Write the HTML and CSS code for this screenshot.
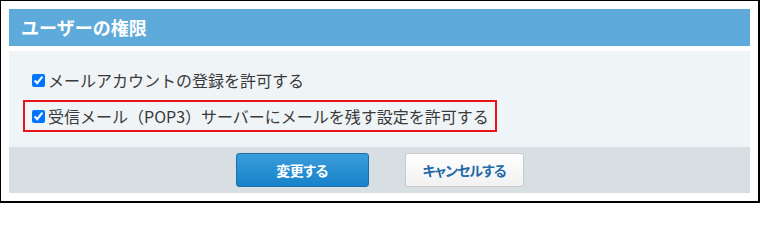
FILE: index.html
```html
<!DOCTYPE html>
<html lang="ja">
<head>
<meta charset="utf-8">
<link rel="stylesheet" href="styles.css">
</head>
<body>
<div class="frame">
  <div class="panel-title">ユーザーの権限</div>
  <div class="panel-body">
    <label class="option"><input type="checkbox" checked><span>メールアカウントの登録を許可する</span></label>
    <label class="option option-highlight"><input type="checkbox" checked><span>受信メール（POP3）サーバーにメールを残す設定を許可する</span></label>
  </div>
  <div class="panel-footer">
    <button class="btn btn-primary">変更する</button>
    <button class="btn btn-secondary">キャンセルする</button>
  </div>
</div>
</body>
</html>
```
FILE: styles.css
```css
html, body {
  margin: 0;
  padding: 0;
  background: #ffffff;
}
.frame {
  box-sizing: border-box;
  width: 760px;
  height: 203px;
  border-top: 1px solid #000;
  border-left: 1px solid #000;
  border-right: 2px solid #000;
  border-bottom: 2px solid #000;
  padding: 8px 8px 8px 8px;
  font-family: "Noto Sans CJK JP", "Noto Sans", sans-serif;
  display: flex;
  flex-direction: column;
}
.panel-title {
  height: 37px;
  background: #5eaadb;
  color: #ffffff;
  font-weight: bold;
  font-size: 18px;
  line-height: 37px;
  padding-left: 12px;
  margin-bottom: 5px;
}
.panel-body {
  background: #eff4f7;
  height: 96px;
  box-sizing: border-box;
  padding: 13px 14px 0 14px;
  display: flex;
  flex-direction: column;
  align-items: flex-start;
  gap: 4px;
}
.option {
  display: flex;
  align-items: center;
  height: 32px;
  box-sizing: border-box;
  border: 2px solid transparent;
  padding: 0 6px 0 3px;
  font-size: 16px;
  color: #3a3a3a;
}
.option input {
  width: 13px;
  height: 13px;
  margin: 0 3px 0 4px;
}
.option-highlight {
  border-color: #e8141b;
}
.panel-footer {
  background: #d8dfe2;
  flex: 1;
  display: flex;
  justify-content: center;
  align-items: center;
  gap: 36px;
}
.btn {
  height: 34px;
  border-radius: 3px;
  font-family: "Noto Sans CJK JP", "Noto Sans", sans-serif;
  font-weight: bold;
  font-size: 14px;
  font-feature-settings: "palt";
  padding: 0;
  cursor: pointer;
}
.btn-primary {
  width: 133px;
  color: #ffffff;
  letter-spacing: -0.5px;
  background: linear-gradient(#3b9ddb, #1782cb);
  border: 1px solid #1d6ea6;
}
.btn-secondary {
  width: 119px;
  color: #1f6aa8;
  letter-spacing: -1px;
  background: linear-gradient(#ffffff, #f1f1f1);
  border: 1px solid #c9c9c9;
}
```
